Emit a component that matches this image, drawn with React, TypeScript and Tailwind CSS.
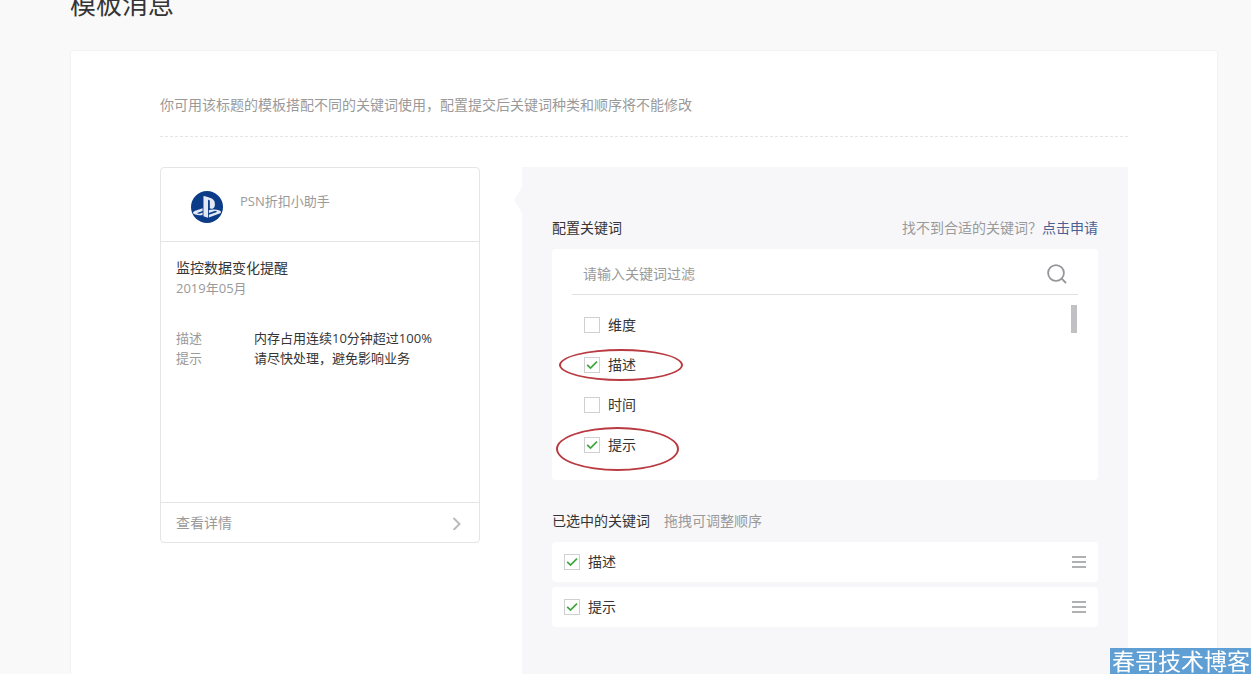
import { useState } from "react";
import { FaPlaystation } from "react-icons/fa";

const KEYWORDS = ["维度", "描述", "时间", "提示"];

const DETAILS = [
  { label: "描述", value: "内存占用连续10分钟超过100%" },
  { label: "提示", value: "请尽快处理，避免影响业务" },
];

function Checkbox({
  label,
  checked,
  onChange,
}: {
  label: string;
  checked: boolean;
  onChange: () => void;
}) {
  return (
    <label className="flex items-center gap-2 text-sm leading-5 text-[#353535]">
      <span className="relative flex size-4">
        <input
          type="checkbox"
          checked={checked}
          onChange={onChange}
          className="peer size-4 appearance-none border border-[#cfd1d0] bg-white"
        />
        <svg
          viewBox="0 0 16 16"
          className="pointer-events-none absolute inset-0 hidden size-4 peer-checked:block"
          fill="none"
          stroke="#3ea63c"
          strokeWidth="1.7"
        >
          <path d="M3.2 7.8 6.5 11.1 13 4.6" />
        </svg>
      </span>
      {label}
    </label>
  );
}

function MessageCard() {
  return (
    <section className="w-80 shrink-0 self-start rounded border border-[#e4e5e6] bg-white">
      <header className="flex h-[74px] gap-[17px] border-b border-[#e4e5e6] pt-[23px] pl-[30px]">
        <span className="flex size-8 items-center justify-center rounded-full bg-[#0c3c88] text-[#e3e9f4]">
          <FaPlaystation size={28} />
        </span>
        <span className="text-[13px] leading-5 text-[#9a9a9a]">PSN折扣小助手</span>
      </header>
      <div className="min-h-[260px] px-[15px] pt-4">
        <h2 className="text-sm leading-5 text-[#353535]">监控数据变化提醒</h2>
        <p className="text-[13px] leading-5 text-[#9a9a9a]">2019年05月</p>
        <dl className="mt-[30px] text-[13px] leading-5">
          {DETAILS.map((d) => (
            <div key={d.label} className="flex">
              <dt className="w-[78px] text-[#9a9a9a]">{d.label}</dt>
              <dd className="text-[#353535]">{d.value}</dd>
            </div>
          ))}
        </dl>
      </div>
      <a
        href="#detail"
        className="flex h-10 items-center justify-between border-t border-[#e4e5e6] px-[15px] text-sm leading-5 text-[#9a9a9a]"
      >
        查看详情
        <svg width="14" height="14" viewBox="0 0 14 14" fill="none" stroke="#b9babc" strokeWidth="2">
          <path d="M3.5 2 9.5 8 3.5 14" />
        </svg>
      </a>
    </section>
  );
}

export default function App() {
  const [selected, setSelected] = useState<string[]>(["描述", "提示"]);
  const [filter, setFilter] = useState("");

  const toggle = (word: string) =>
    setSelected((list) =>
      list.includes(word) ? list.filter((w) => w !== word) : [...list, word],
    );

  return (
    <div className="flex h-screen flex-col overflow-hidden bg-[#f9f9fa] pr-[33px] pl-[70px] font-['Open_Sans','Noto_Sans_CJK_SC',sans-serif]">
      <h1 className="-mt-[14px] mb-7 shrink-0 text-[26px] leading-9 font-normal text-[#353535]">
        模板消息
      </h1>
      <main className="flex grow flex-col rounded-t-sm border border-b-0 border-[#f3f3f4] bg-white px-[89px] pt-11">
        <p className="border-b border-dashed border-[#e4e5e6] pb-[21px] text-sm leading-5 text-[#9a9a9a]">
          你可用该标题的模板搭配不同的关键词使用，配置提交后关键词种类和顺序将不能修改
        </p>
        <div className="mt-[30px] flex grow gap-[42px]">
          <MessageCard />
          <section className="relative grow bg-[#f7f7f9] px-[30px] pt-[51px] pb-12">
            <svg
              className="absolute top-5 -left-2 h-[26px] w-2"
              viewBox="0 0 8 26"
              fill="#f7f7f9"
            >
              <path d="M8 0 0 13 8 26Z" />
            </svg>
            <div className="flex justify-between text-sm leading-5">
              <h2 className="text-[#353535]">配置关键词</h2>
              <p className="text-[#9a9a9a]">
                找不到合适的关键词？
                <a href="#apply" className="text-[#4a6092]">
                  点击申请
                </a>
              </p>
            </div>

            <div className="mt-[11px] rounded-sm bg-white px-5 pb-[15px]">
              <div className="flex h-[46px] items-center border-b border-[#e0e1e3] pt-1 pr-[11px] pl-[11px]">
                <input
                  type="text"
                  aria-label="请输入关键词过滤"
                  placeholder="请输入关键词过滤"
                  value={filter}
                  onChange={(e) => setFilter(e.target.value)}
                  className="grow bg-transparent text-sm leading-5 text-[#353535] outline-none placeholder:text-[#9a9a9a]"
                />
                <button type="button" aria-label="搜索">
                  <svg
                    className="block size-5"
                    viewBox="0 0 20 20"
                    fill="none"
                    stroke="#95969a"
                    strokeWidth="1.8"
                  >
                    <circle cx="9" cy="9" r="7.9" />
                    <path d="M14.4 14.4 19 19" />
                  </svg>
                </button>
              </div>
              <div className="mt-[10px] flex justify-between pr-px">
                <ul>
                  {KEYWORDS.filter((w) => w.includes(filter)).map((word) => (
                    <li key={word} className="relative flex h-10 items-center pl-3">
                      <Checkbox
                        label={word}
                        checked={selected.includes(word)}
                        onChange={() => toggle(word)}
                      />
                      {word === "描述" && (
                        <span className="pointer-events-none absolute top-1 -left-[13px] h-8 w-[124px] rounded-[50%] border-2 border-[#b93a40]" />
                      )}
                      {word === "提示" && (
                        <span className="pointer-events-none absolute top-[2px] -left-4 h-11 w-[123px] rounded-[50%] border-2 border-[#b93a40]" />
                      )}
                    </li>
                  ))}
                </ul>
                <span className="h-7 w-[6px] bg-[#c1c1c3]" />
              </div>
            </div>

            <div className="mt-[31px] flex gap-[14px] text-sm leading-5">
              <h2 className="text-[#353535]">已选中的关键词</h2>
              <span className="text-[#9a9a9a]">拖拽可调整顺序</span>
            </div>
            <ul className="mt-[11px] flex flex-col gap-[5px]">
              {selected.map((word) => (
                <li
                  key={word}
                  className="flex h-10 items-center justify-between rounded-sm bg-white px-3"
                >
                  <Checkbox label={word} checked onChange={() => toggle(word)} />
                  <button type="button" aria-label="拖拽排序" className="flex flex-col gap-[3px]">
                    <span className="h-[2px] w-[14px] bg-[#b0b1b3]" />
                    <span className="h-[2px] w-[14px] bg-[#b0b1b3]" />
                    <span className="h-[2px] w-[14px] bg-[#b0b1b3]" />
                  </button>
                </li>
              ))}
            </ul>
          </section>
        </div>
      </main>
      <div className="fixed right-0 bottom-0 bg-[#609fd3] pr-px pl-[2px] text-[23px] leading-[26px] text-white">
        春哥技术博客
      </div>
    </div>
  );
}
